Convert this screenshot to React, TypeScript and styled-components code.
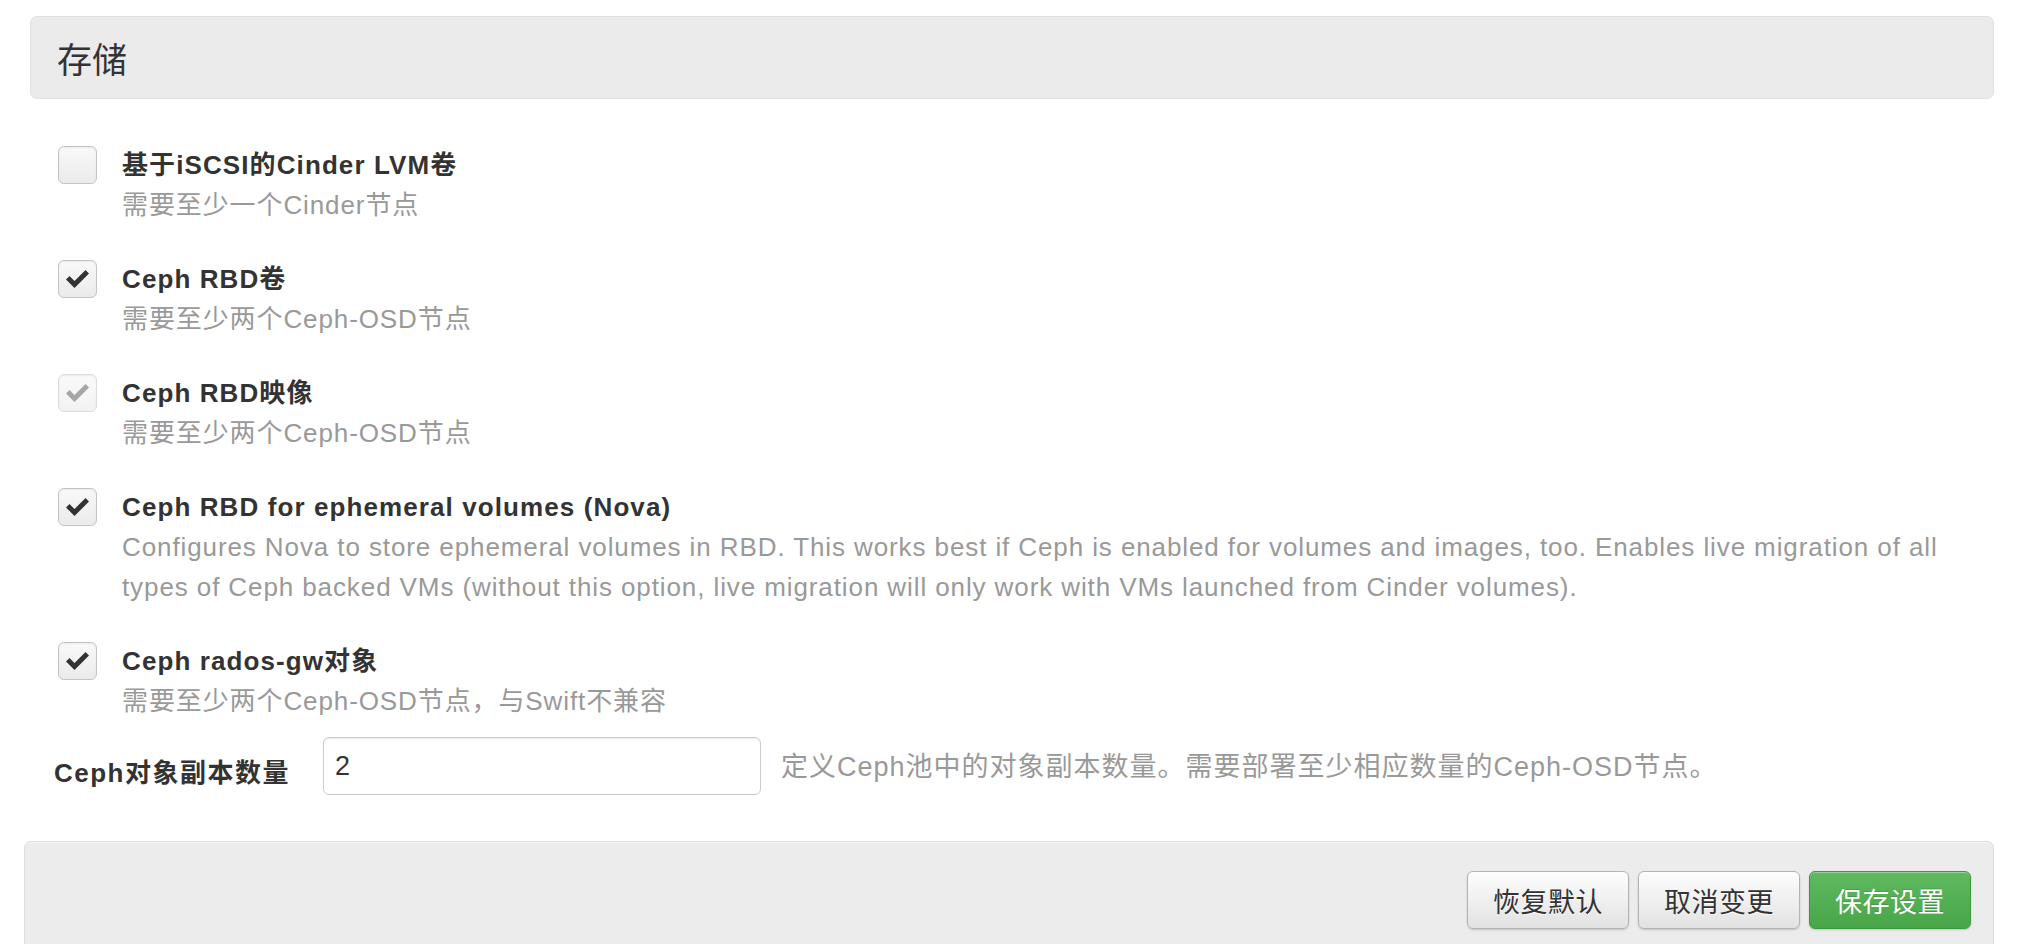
import React from "react";
import styled, { createGlobalStyle } from "styled-components";

const Global = createGlobalStyle`
  html, body { margin: 0; padding: 0; background: #ffffff; }
  body {
    font-family: "Liberation Sans", "Noto Sans CJK SC", sans-serif;
    color: #333333;
  }
  * { box-sizing: border-box; }
`;

const Page = styled.div`
  width: 2018px;
  height: 944px;
  overflow: hidden;
  padding: 16px 24px 0 24px;
  display: flex;
  flex-direction: column;
`;

const Header = styled.div`
  margin-left: 6px;
  height: 83px;
  display: flex;
  align-items: center;
  padding-left: 26px;
  background: #ebebeb;
  border: 1px solid #e0e0e0;
  border-radius: 7px;
  font-size: 35px;
  color: #333;
`;

const OptionList = styled.div`
  margin-top: 46px;
  padding-left: 34px;
  display: flex;
  flex-direction: column;
  gap: 34px;
`;

const Option = styled.div`
  display: grid;
  grid-template-columns: 39px 1fr;
  column-gap: 25px;
  align-items: start;
`;

const Box = styled.div<{ $disabled?: boolean }>`
  width: 39px;
  height: 38px;
  margin-top: 1px;
  border-radius: 6px;
  border: 1px solid ${(p) => (p.$disabled ? "#dcdcdc" : "#c4c4c4")};
  background: ${(p) =>
    p.$disabled
      ? "linear-gradient(#fafafa, #f2f2f2)"
      : "linear-gradient(#f9f9f9, #ebebeb)"};
  box-shadow: inset 0 1px 2px rgba(0, 0, 0, 0.06), 0 1px 0 rgba(255,255,255,0.8);
  display: flex;
  align-items: center;
  justify-content: center;
`;

const OptionText = styled.div`
  display: flex;
  flex-direction: column;
  padding-right: 30px;
`;

const Label = styled.div`
  font-size: 26px;
  letter-spacing: 1.1px;
  line-height: 40px;
  font-weight: bold;
  color: #333;
`;

const Desc = styled.div`
  font-size: 26px;
  letter-spacing: 0.9px;
  line-height: 40px;
  color: #999999;
`;

const InputRow = styled.div`
  margin-top: 16px;
  padding-left: 30px;
  display: flex;
  align-items: center;
`;

const FieldLabel = styled.label`
  width: 269px;
  font-size: 26px;
  letter-spacing: 1.5px;
  font-weight: bold;
  color: #333;
  padding-top: 8px;
  white-space: nowrap;
`;

const TextInput = styled.input`
  width: 438px;
  height: 58px;
  border: 1px solid #cccccc;
  border-radius: 6px;
  padding: 0 11px;
  font-family: "Liberation Sans", sans-serif;
  font-size: 27px;
  color: #333;
  box-shadow: inset 0 1px 1px rgba(0, 0, 0, 0.075);
  outline: none;
`;

const HelpText = styled.span`
  margin-left: 20px;
  font-size: 27px;
  letter-spacing: 1px;
  color: #999999;
  margin-top: -4px;
  white-space: nowrap;
`;

const Footer = styled.div`
  margin-top: 46px;
  flex: 1;
  background: #ececec;
  border: 1px solid #dedede;
  border-bottom: none;
  border-radius: 7px 7px 0 0;
  box-shadow: inset 0 1px 0 #f6f6f6;
  display: flex;
  justify-content: flex-end;
  align-items: flex-start;
  gap: 9px;
  padding: 29px 22px 0 0;
`;

const Button = styled.button<{ $primary?: boolean }>`
  height: 58px;
  width: 162px;
  padding: 0;
  border-radius: 6px;
  font-family: "Liberation Sans", "Noto Sans CJK SC", sans-serif;
  font-size: 27px;
  letter-spacing: 0.5px;
  cursor: pointer;
  color: ${(p) => (p.$primary ? "#ffffff" : "#333333")};
  border: 1px solid ${(p) => (p.$primary ? "#3f9a3f" : "#b3b3b3")};
  background: ${(p) =>
    p.$primary
      ? "linear-gradient(#5fba5f, #48a548)"
      : "linear-gradient(#fdfdfd, #e2e2e2)"};
  box-shadow: inset 0 1px 0 rgba(255, 255, 255, 0.35), 0 1px 2px rgba(0, 0, 0, 0.18);
  text-shadow: ${(p) => (p.$primary ? "0 -1px 0 rgba(0,0,0,0.15)" : "0 1px 0 #fff")};
`;

const Check = ({ color }: { color: string }) => (
  <svg width="25" height="20" viewBox="0 0 24 20">
    <polygon points="0.5,10.5 4,7 9,12 20,1 23.5,4.5 9,19" fill={color} />
  </svg>
);

type Item = {
  label: string;
  desc: string;
  state: "off" | "on" | "disabled";
};

const items: Item[] = [
  { label: "基于iSCSI的Cinder LVM卷", desc: "需要至少一个Cinder节点", state: "off" },
  { label: "Ceph RBD卷", desc: "需要至少两个Ceph-OSD节点", state: "on" },
  { label: "Ceph RBD映像", desc: "需要至少两个Ceph-OSD节点", state: "disabled" },
  {
    label: "Ceph RBD for ephemeral volumes (Nova)",
    desc:
      "Configures Nova to store ephemeral volumes in RBD. This works best if Ceph is enabled for volumes and images, too. Enables live migration of all types of Ceph backed VMs (without this option, live migration will only work with VMs launched from Cinder volumes).",
    state: "on",
  },
  { label: "Ceph rados-gw对象", desc: "需要至少两个Ceph-OSD节点，与Swift不兼容", state: "on" },
];

export default function App() {
  return (
    <>
      <Global />
      <Page>
        <Header>存储</Header>
        <OptionList>
          {items.map((it) => (
            <Option key={it.label}>
              <Box $disabled={it.state === "disabled"}>
                {it.state === "on" && <Check color="#333333" />}
                {it.state === "disabled" && <Check color="#a6a6a6" />}
              </Box>
              <OptionText>
                <Label>{it.label}</Label>
                <Desc>{it.desc}</Desc>
              </OptionText>
            </Option>
          ))}
        </OptionList>
        <InputRow>
          <FieldLabel>Ceph对象副本数量</FieldLabel>
          <TextInput defaultValue="2" />
          <HelpText>定义Ceph池中的对象副本数量。需要部署至少相应数量的Ceph-OSD节点。</HelpText>
        </InputRow>
        <Footer>
          <Button>恢复默认</Button>
          <Button>取消变更</Button>
          <Button $primary>保存设置</Button>
        </Footer>
      </Page>
    </>
  );
}
